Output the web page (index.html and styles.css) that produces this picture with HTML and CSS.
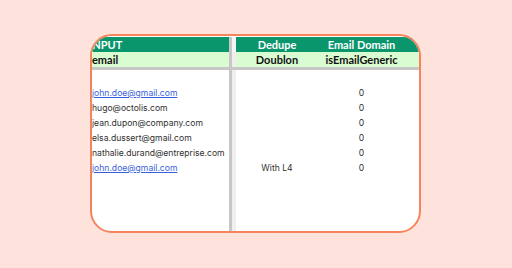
FILE: index.html
```
<!DOCTYPE html>
<html>
<head>
<meta charset="utf-8">
<link rel="stylesheet" href="styles.css">
</head>
<body>
<div class="card">
  <div class="sheet">
    <div class="row head1">
      <div class="c a a-title">INPUT</div>
      <div class="div-dark"></div><div class="div-light"></div>
      <div class="c b center">Dedupe</div>
      <div class="c d center">Email Domain</div>
      <div class="c e"></div>
    </div>
    <div class="row head2">
      <div class="c a">email</div>
      <div class="div-dark"></div><div class="div-light"></div>
      <div class="c b center">Doublon</div>
      <div class="c d center">isEmailGeneric</div>
      <div class="c e"></div>
    </div>
    <div class="hline"></div>
    <div class="body">
      <div class="col-a">
        <div class="cell"></div>
        <div class="cell"><a class="link">john.doe@gmail.com</a></div>
        <div class="cell">hugo@octolis.com</div>
        <div class="cell">jean.dupon@company.com</div>
        <div class="cell">elsa.dussert@gmail.com</div>
        <div class="cell">nathalie.durand@entreprise.com</div>
        <div class="cell"><a class="link">john.doe@gmail.com</a></div>
      </div>
      <div class="div-dark"></div><div class="div-light"></div>
      <div class="col-b">
        <div class="cell"></div>
        <div class="cell"></div>
        <div class="cell"></div>
        <div class="cell"></div>
        <div class="cell"></div>
        <div class="cell"></div>
        <div class="cell">With L4</div>
      </div>
      <div class="col-d">
        <div class="cell"></div>
        <div class="cell">0</div>
        <div class="cell">0</div>
        <div class="cell">0</div>
        <div class="cell">0</div>
        <div class="cell">0</div>
        <div class="cell">0</div>
      </div>
    </div>
  </div>
</div>
</body>
</html>
```
FILE: styles.css
```
html, body { margin: 0; padding: 0; }
body {
  width: 512px;
  height: 268px;
  background: #fde3dc;
  overflow: hidden;
}
.card {
  box-sizing: border-box;
  width: 331px;
  height: 199px;
  margin: 34px 0 0 90px;
  border: 2px solid #f5845c;
  border-radius: 22px;
  background: #ffffff;
  overflow: hidden;
}
.sheet {
  margin-left: -4px;
  display: flex;
  flex-direction: column;
  height: 100%;
}
.row {
  display: flex;
  height: 15px;
  align-items: stretch;
}
.head1 {
  background: #0a966d;
  color: #ffffff;
  margin-top: 1px;
}
.head2 {
  background: #d9fcd2;
  color: #111111;
}
.row .c {
  font-family: "Lato", sans-serif;
  font-weight: 700;
  font-size: 11px;
  line-height: 15px;
  white-space: nowrap;
}
.a { width: 141px; padding-left: 4px; box-sizing: border-box; }
.a-title { padding-left: 1px; }
.b { width: 82px; }
.d { width: 87px; }
.e { flex: 1; }
.center { text-align: center; }
.div-dark { width: 3px; background: #c7c7c7; flex: none; }
.div-light { width: 4px; background: #efefef; flex: none; }
.head1 .div-light { background: #f4f4f4; }
.hline {
  height: 3px;
  background: #c7c7c7;
}
.body {
  flex: 1;
  display: flex;
  align-items: stretch;
}
.col-a { width: 141px; padding-left: 4px; box-sizing: border-box; }
.col-b { width: 82px; text-align: center; }
.col-d { width: 87px; text-align: center; }
.cell {
  height: 15px;
  line-height: 16px;
  font-family: "Inter", sans-serif;
  font-size: 8.6px;
  color: #2f2f2f;
  white-space: nowrap;
}
.link {
  color: #3b5fd9;
  text-decoration: underline;
}
```
